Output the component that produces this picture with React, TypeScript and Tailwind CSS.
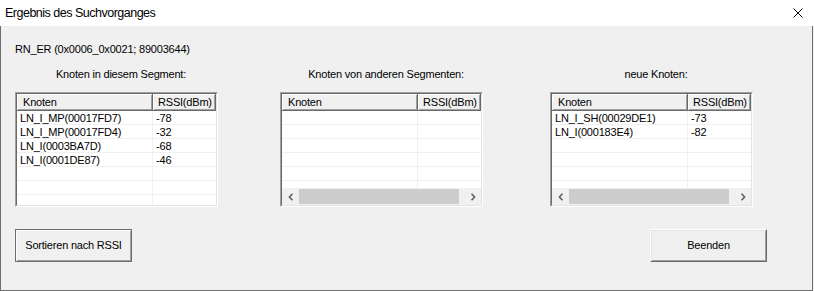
type Row = { name: string; rssi: string };

const lists: { title: string; rows: Row[]; scroll: boolean; gap: string }[] = [
  {
    title: "Knoten in diesem Segment:",
    rows: [
      { name: "LN_I_MP(00017FD7)", rssi: "-78" },
      { name: "LN_I_MP(00017FD4)", rssi: "-32" },
      { name: "LN_I(0003BA7D)", rssi: "-68" },
      { name: "LN_I(0001DE87)", rssi: "-46" },
    ],
    scroll: false,
    gap: "ml-0",
  },
  {
    title: "Knoten von anderen Segmenten:",
    rows: [],
    scroll: true,
    gap: "ml-[62px]",
  },
  {
    title: "neue Knoten:",
    rows: [
      { name: "LN_I_SH(00029DE1)", rssi: "-73" },
      { name: "LN_I(000183E4)", rssi: "-82" },
    ],
    scroll: true,
    gap: "ml-[67px]",
  },
];

function HeaderCell({ children, className }: { children: React.ReactNode; className: string }) {
  return (
    <div
      className={`flex h-full items-center border-r border-b border-[#696969] bg-[#f0f0f0] shadow-[inset_1px_1px_0_#ffffff,inset_-1px_-1px_0_#a0a0a0] ${className}`}
    >
      {children}
    </div>
  );
}

function Chevron({ dir }: { dir: "left" | "right" }) {
  return (
    <svg width="6" height="8" viewBox="0 0 6 8" fill="none">
      <path
        d={dir === "left" ? "M4.5 0.8 L1.4 4 L4.5 7.2" : "M1.5 0.8 L4.6 4 L1.5 7.2"}
        stroke="#606060"
        strokeWidth="1.6"
      />
    </svg>
  );
}

function ScrollBar() {
  return (
    <div className="flex h-[17px] shrink-0 bg-[#f0f0f0]">
      <div className="grid w-[17px] place-items-center">
        <Chevron dir="left" />
      </div>
      <div className="flex flex-1 py-[1px]">
        <div className="w-[160px] bg-[#cdcdcd]" />
      </div>
      <div className="grid w-[17px] place-items-center">
        <Chevron dir="right" />
      </div>
    </div>
  );
}

function NodeList({ rows, scroll }: { rows: Row[]; scroll: boolean }) {
  const filled: (Row | null)[] = [...rows, ...Array(8 - rows.length).fill(null)];
  return (
    <div className="h-[115px] w-[203px] border border-t-[#a0a0a0] border-l-[#a0a0a0] border-r-white border-b-white">
      <div className="flex h-full flex-col overflow-hidden border border-t-[#696969] border-l-[#696969] border-r-[#e3e3e3] border-b-[#e3e3e3] bg-white">
        <div className="flex h-[17px] shrink-0">
          <HeaderCell className="w-[136px] pl-[6px]">Knoten</HeaderCell>
          <HeaderCell className="w-[63px] pl-[5px]">RSSI(dBm)</HeaderCell>
        </div>
        <div className="min-h-0 flex-1 overflow-hidden">
          {filled.map((row, i) => (
            <div key={i} className="flex h-[14px] border-b border-[#f0f0f0] leading-[14px]">
              <div className="w-[136px] border-r border-[#f0f0f0] pl-[3px]">{row?.name}</div>
              <div className="flex-1 pl-[3px]">{row?.rssi}</div>
            </div>
          ))}
        </div>
        {scroll && <ScrollBar />}
      </div>
    </div>
  );
}

export default function App() {
  return (
    <div className="flex h-[291px] w-[814px] flex-col bg-[#f0f0f0] font-['Liberation_Sans',Arial,sans-serif] text-black">
      <div className="flex h-[26px] shrink-0 items-center bg-white pl-[5px] text-[12.5px] tracking-[-0.5px]">
        <span>Ergebnis des Suchvorganges</span>
        <svg className="ml-auto mr-[11px]" width="10" height="10" viewBox="0 0 10 10">
          <path d="M0.5 0.5 L9.5 9.5 M9.5 0.5 L0.5 9.5" stroke="#000" strokeWidth="1" />
        </svg>
      </div>

      <div className="flex w-[813px] flex-1 flex-col border-x border-b border-[#707070] pl-[14px] pt-[17px] text-[11px] leading-[13px] tracking-[-0.2px]">
        <p>RN_ER (0x0006_0x0021; 89003644)</p>

        <div className="mt-[12px] flex">
          {lists.map((list) => (
            <div key={list.title} className={`flex w-[203px] flex-col ${list.gap}`}>
              <p className="pl-[9px] text-center">{list.title}</p>
              <div className="mt-[11px]">
                <NodeList rows={list.rows} scroll={list.scroll} />
              </div>
            </div>
          ))}
        </div>

        <div className="mt-[22px] flex pr-[45px]">
          <button className="h-[33px] w-[117px] border border-[#6d6d6d] bg-[#f0f0f0] shadow-[inset_1px_1px_0_#ffffff,inset_-1px_-1px_0_#a0a0a0]">
            Sortieren nach RSSI
          </button>
          <button className="ml-auto h-[33px] w-[117px] border border-t-white border-l-white border-r-[#696969] border-b-[#696969] bg-[#f0f0f0] shadow-[inset_1px_1px_0_#e3e3e3,inset_-1px_-1px_0_#a0a0a0]">
            Beenden
          </button>
        </div>
      </div>
    </div>
  );
}
